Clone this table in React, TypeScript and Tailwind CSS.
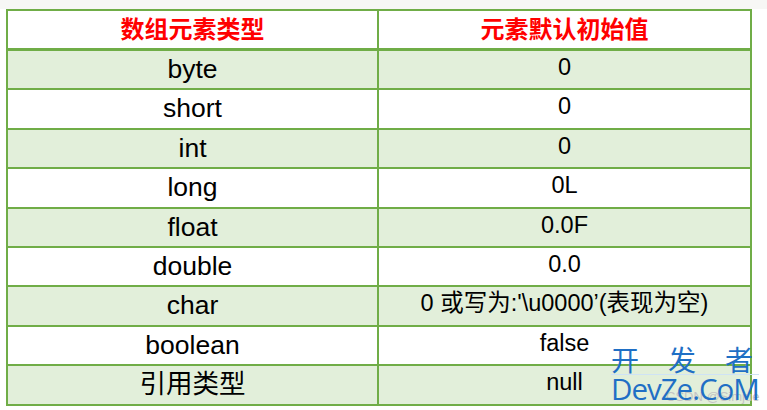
import React from "react";

const rows: [string, string][] = [
  ["byte", "0"],
  ["short", "0"],
  ["int", "0"],
  ["long", "0L"],
  ["float", "0.0F"],
  ["double", "0.0"],
  ["char", "0 或写为:'\\u0000’(表现为空)"],
  ["boolean", "false"],
  ["引用类型", "null"],
];

const font = { fontFamily: '"Liberation Sans", Arial, "Noto Sans CJK SC", sans-serif' };

export default function App() {
  return (
    <div className="relative w-[767px] h-[410px] bg-white overflow-hidden" style={font}>
      <div className="absolute left-0 top-0 w-full h-[9px] bg-[#f7f7f5]" />
      <div className="ml-[6px] pt-[9px] w-[746px]">
        <div className="border-2 border-[#70ad47] border-b-0">
          <div className="grid grid-cols-[371px_1fr] h-[40px] border-b-[3px] border-[#70ad47] bg-white">
            <div className="flex items-center justify-center border-r-2 border-[#70ad47] text-[24px] font-bold text-[#ff0000] leading-none">
              数组元素类型
            </div>
            <div className="flex items-center justify-center text-[24px] font-bold text-[#ff0000] leading-none">
              元素默认初始值
            </div>
          </div>
          {rows.map(([a, b], i) => (
            <div
              key={i}
              className={`grid grid-cols-[371px_1fr] h-[39.4px] border-b-2 border-[#70ad47] ${
                i % 2 === 0 ? "bg-[#e2efda]" : "bg-white"
              }`}
            >
              <div className="flex items-center justify-center border-r-2 border-[#70ad47] text-[26.5px] text-black leading-none pb-[1px]">
                {a}
              </div>
              <div className="flex items-center justify-center text-[23.5px] text-black leading-none pb-[4px]">
                {b}
              </div>
            </div>
          ))}
        </div>
      </div>
      <div className="absolute left-[611px] top-[344px] w-[150px] text-[#1f6fc5]">
        <div
          className="flex justify-between w-[142px] text-[28px] leading-[30px] whitespace-nowrap"
          style={{ fontFamily: '"Noto Sans CJK SC", sans-serif', fontWeight: 400 }}
        >
          <span>开</span>
          <span>发</span>
          <span>者</span>
        </div>
        <div className="h-[1px] w-[148px] bg-[#cfe3f5]" />
        <div className="absolute left-[55px] top-[46px] text-[13px] text-[#c4c4c4] leading-none whitespace-nowrap">
          CSDN @Simjue
        </div>
        <div
          className="relative text-[29.5px] leading-[28px] tracking-[-1px] whitespace-nowrap"
          style={{ fontFamily: '"Open Sans", "DejaVu Sans", sans-serif' }}
        >
          DevZe.CoM
        </div>
      </div>
    </div>
  );
}
